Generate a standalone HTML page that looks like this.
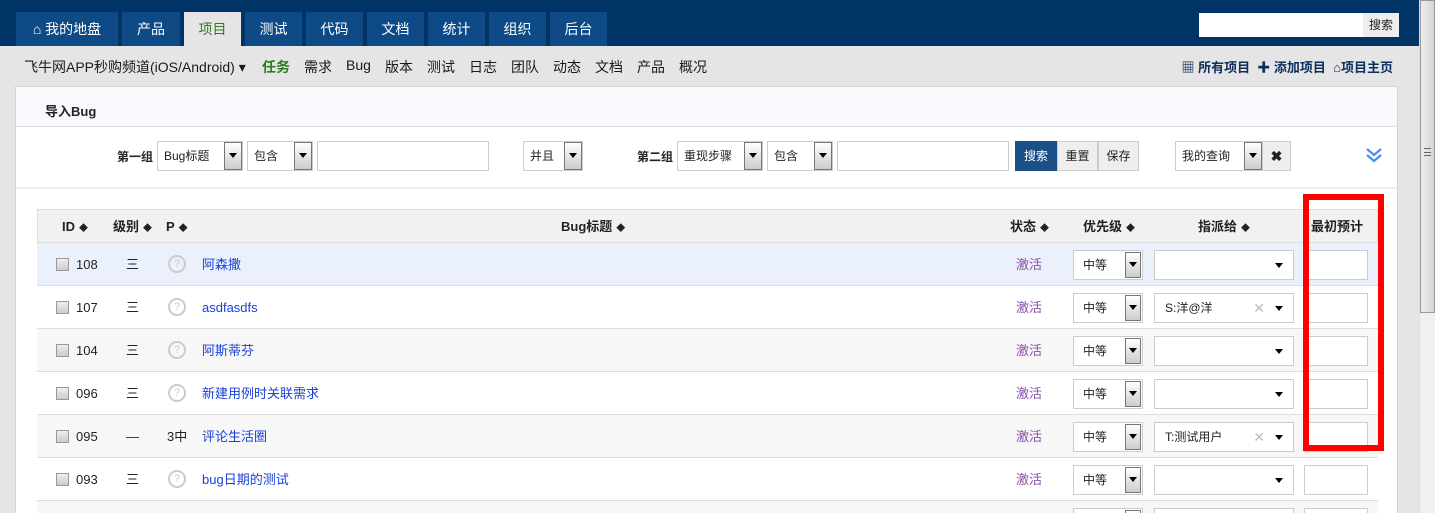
<!DOCTYPE html>
<html style="width:1435px;height:513px;overflow:hidden"><head><meta charset="utf-8"><style>
*{box-sizing:border-box;margin:0;padding:0}
body{width:1435px;height:513px;overflow:hidden;background:#e5e5e5;font-family:"Liberation Sans","Noto Sans CJK SC",sans-serif;font-size:13px;color:#222;position:relative}
.a{position:absolute}
.top{left:0;top:0;width:1419px;height:46px;background:#003366}
.tab{position:absolute;top:12px;height:34px;background:#0e4a86;color:#fff;font-size:14px;line-height:34px;text-align:center}
.tab.on{background:#e5e5e5;color:#2e7d1e}
.sub{top:57px;font-size:14px;color:#1a1a1a}
.nv{position:absolute;top:57px;font-size:14px;color:#1a1a1a}
.panel{left:15px;top:86px;width:1383px;height:427px;background:#fff;border:1px solid #d5d5d5;border-bottom:none}
.sel{position:absolute;height:30px;border:1px solid #ccc;background:#fff;font-size:12px;line-height:28px;padding-left:6px}
.sel i{position:absolute;right:0;top:0;width:18px;height:28px;border:1px solid #777;background:linear-gradient(#fff,#ccc)}
.sel i:after{content:"";position:absolute;left:4px;top:10px;border:4px solid transparent;border-top:5px solid #000}
.inp{position:absolute;height:30px;border:1px solid #ccc;background:#fff}
.btn{position:absolute;height:30px;border:1px solid #ccc;background:#eee;font-size:12px;line-height:28px;text-align:center}
.row{position:absolute;left:37px;width:1341px;height:43px;border-bottom:1px solid #ddd}
.cb{position:absolute;left:19px;top:15px;width:13px;height:13px;border:1px solid #999;background:linear-gradient(#eee,#ccc)}
.q{position:absolute;left:131px;top:12px;width:18px;height:18px;border:2px solid #ccc;border-radius:50%;color:#ccc;font-size:11px;text-align:center;line-height:14px}
.t{position:absolute;top:0;line-height:43px;font-size:13px}
.lnk{color:#1a3fd6}
.st{color:#8a4fa8}
.ps{position:absolute;left:1036px;top:7px;width:70px;height:30px;border:1px solid #ccc;background:#fff;font-size:12px;line-height:28px;padding-left:9px}
.ps i{position:absolute;right:1px;top:1px;width:16px;height:26px;border:1px solid #777;background:linear-gradient(#fff,#ccc)}
.ps i:after{content:"";position:absolute;left:3px;top:9px;border:4px solid transparent;border-top:5px solid #000}
.as{position:absolute;left:1117px;top:7px;width:140px;height:30px;border:1px solid #ccc;background:#fff;font-size:12px;line-height:28px;padding-left:10px}
.as:after{content:"";position:absolute;right:10px;top:12px;border:4px solid transparent;border-top:5px solid #000}
.as b{position:absolute;right:28px;top:0;color:#bbb;font-weight:normal;font-size:14px}
.es{position:absolute;left:1267px;top:7px;width:64px;height:30px;border:1px solid #ccc;background:#fff}
.hd{position:absolute;top:0;line-height:33px;font-weight:bold;font-size:13px}
.ar{font-size:9px;margin-left:4px}
</style></head><body>
<div class="a top"></div>
<div class="tab" style="left:16px;width:102px">&#8962; 我的地盘</div>
<div class="tab" style="left:122px;width:58px">产品</div>
<div class="tab on" style="left:184px;width:57px">项目</div>
<div class="tab" style="left:245px;width:57px">测试</div>
<div class="tab" style="left:306px;width:57px">代码</div>
<div class="tab" style="left:367px;width:57px">文档</div>
<div class="tab" style="left:428px;width:57px">统计</div>
<div class="tab" style="left:489px;width:57px">组织</div>
<div class="tab" style="left:550px;width:57px">后台</div>
<div class="a" style="left:1199px;top:13px;width:164px;height:24px;background:#fff"></div>
<div class="a" style="left:1363px;top:13px;width:36px;height:24px;background:#eee;font-size:12px;line-height:24px;text-align:center">搜索</div>
<div class="a sub" style="left:24px;white-space:nowrap">飞牛网APP秒购频道(iOS/Android) ▾</div>
<div class="nv" style="left:262px;color:#2e7d1e;font-weight:bold">任务</div>
<div class="nv" style="left:304px">需求</div>
<div class="nv" style="left:346px">Bug</div>
<div class="nv" style="left:385px">版本</div>
<div class="nv" style="left:427px">测试</div>
<div class="nv" style="left:469px">日志</div>
<div class="nv" style="left:511px">团队</div>
<div class="nv" style="left:553px">动态</div>
<div class="nv" style="left:595px">文档</div>
<div class="nv" style="left:637px">产品</div>
<div class="nv" style="left:679px">概况</div>
<div class="a sub" style="left:1130px;width:263px;text-align:right;font-size:13px;font-weight:bold;color:#0e2e5e;white-space:nowrap">▦ 所有项目 &nbsp;✚ 添加项目 &nbsp;&#8962;项目主页</div>
<div class="a panel">
 <div class="a" style="left:0;top:0;width:1381px;height:40px;background:#f8f9fc;border-bottom:1px solid #ddd"></div>
 <div class="a" style="left:29px;top:14px;font-weight:bold;font-size:13px">导入Bug</div>
 <div class="a" style="left:0;top:100px;width:1381px;height:2px;background:#eee"></div>
</div>
<div class="a" style="left:117px;top:148px;font-weight:bold;font-size:12px">第一组</div>
<div class="sel" style="left:157px;top:141px;width:86px">Bug标题<i></i></div>
<div class="sel" style="left:247px;top:141px;width:66px">包含<i></i></div>
<div class="inp" style="left:317px;top:141px;width:172px"></div>
<div class="sel" style="left:523px;top:141px;width:60px">并且<i></i></div>
<div class="a" style="left:637px;top:148px;font-weight:bold;font-size:12px">第二组</div>
<div class="sel" style="left:677px;top:141px;width:86px">重现步骤<i></i></div>
<div class="sel" style="left:767px;top:141px;width:66px">包含<i></i></div>
<div class="inp" style="left:837px;top:141px;width:172px"></div>
<div class="btn" style="left:1015px;top:141px;width:42px;background:#1a4f88;color:#fff;border-color:#1a4f88">搜索</div>
<div class="btn" style="left:1057px;top:141px;width:41px">重置</div>
<div class="btn" style="left:1098px;top:141px;width:41px">保存</div>
<div class="sel" style="left:1175px;top:141px;width:88px">我的查询<i></i></div>
<div class="btn" style="left:1262px;top:141px;width:29px;font-weight:bold;font-size:14px">✖</div>
<svg class="a" style="left:1365px;top:147px" width="18" height="16" viewBox="0 0 18 16"><path d="M2 2 L9 8 L16 2 M2 8 L9 14 L16 8" fill="none" stroke="#4a8ef0" stroke-width="2.2"/></svg>
<div class="row" style="top:209px;height:34px;background:#f1f1f1;border:1px solid #ddd">
 <div class="hd" style="left:24px">ID<span class="ar">◆</span></div>
 <div class="hd" style="left:75px">级别<span class="ar">◆</span></div>
 <div class="hd" style="left:128px">P<span class="ar">◆</span></div>
 <div class="hd" style="left:523px">Bug标题<span class="ar">◆</span></div>
 <div class="hd" style="left:972px">状态<span class="ar">◆</span></div>
 <div class="hd" style="left:1045px">优先级<span class="ar">◆</span></div>
 <div class="hd" style="left:1160px">指派给<span class="ar">◆</span></div>
 <div class="hd" style="left:1273px">最初预计</div>
</div>
<div class="row" style="top:243px;background:#eaf1fc"><div class="cb"></div><div class="t" style="left:39px">108</div><div class="t" style="left:89px">三</div><div class="q">?</div><div class="t lnk" style="left:165px">阿森撒</div><div class="t st" style="left:979px">激活</div><div class="ps">中等<i></i></div><div class="as"></div><div class="es"></div></div>
<div class="row" style="top:286px;background:#fff"><div class="cb"></div><div class="t" style="left:39px">107</div><div class="t" style="left:89px">三</div><div class="q">?</div><div class="t lnk" style="left:165px">asdfasdfs</div><div class="t st" style="left:979px">激活</div><div class="ps">中等<i></i></div><div class="as">S:洋@洋<b>✕</b></div><div class="es"></div></div>
<div class="row" style="top:329px;background:#f7f7f7"><div class="cb"></div><div class="t" style="left:39px">104</div><div class="t" style="left:89px">三</div><div class="q">?</div><div class="t lnk" style="left:165px">阿斯蒂芬</div><div class="t st" style="left:979px">激活</div><div class="ps">中等<i></i></div><div class="as"></div><div class="es"></div></div>
<div class="row" style="top:372px;background:#fff"><div class="cb"></div><div class="t" style="left:39px">096</div><div class="t" style="left:89px">三</div><div class="q">?</div><div class="t lnk" style="left:165px">新建用例时关联需求</div><div class="t st" style="left:979px">激活</div><div class="ps">中等<i></i></div><div class="as"></div><div class="es"></div></div>
<div class="row" style="top:415px;background:#f7f7f7"><div class="cb"></div><div class="t" style="left:39px">095</div><div class="t" style="left:89px">—</div><div class="t" style="left:130px">3中</div><div class="t lnk" style="left:165px">评论生活圈</div><div class="t st" style="left:979px">激活</div><div class="ps">中等<i></i></div><div class="as">T:测试用户<b>✕</b></div><div class="es"></div></div>
<div class="row" style="top:458px;background:#fff"><div class="cb"></div><div class="t" style="left:39px">093</div><div class="t" style="left:89px">三</div><div class="q">?</div><div class="t lnk" style="left:165px">bug日期的测试</div><div class="t st" style="left:979px">激活</div><div class="ps">中等<i></i></div><div class="as"></div><div class="es"></div></div>
<div class="row" style="top:501px;height:12px;overflow:hidden;background:#f7f7f7;border-bottom:none"><div class="ps"><i></i></div><div class="as"></div><div class="es"></div></div>
<div class="a" style="left:1303px;top:194px;width:81px;height:257px;border:6px solid #ff0000"></div>
<div class="a" style="left:1419px;top:0;width:16px;height:513px;background:#f0f0f0;border-left:1px solid #ddd"></div>
<div class="a" style="left:1420px;top:0;width:15px;height:313px;background:linear-gradient(90deg,#eee,#d4d4d4);border:1px solid #999"></div>
<div class="a" style="left:1424px;top:148px;width:7px;height:8px;border-top:1px solid #666;border-bottom:1px solid #666"></div>
<div class="a" style="left:1424px;top:152px;width:7px;height:1px;background:#666"></div>
</body></html>
